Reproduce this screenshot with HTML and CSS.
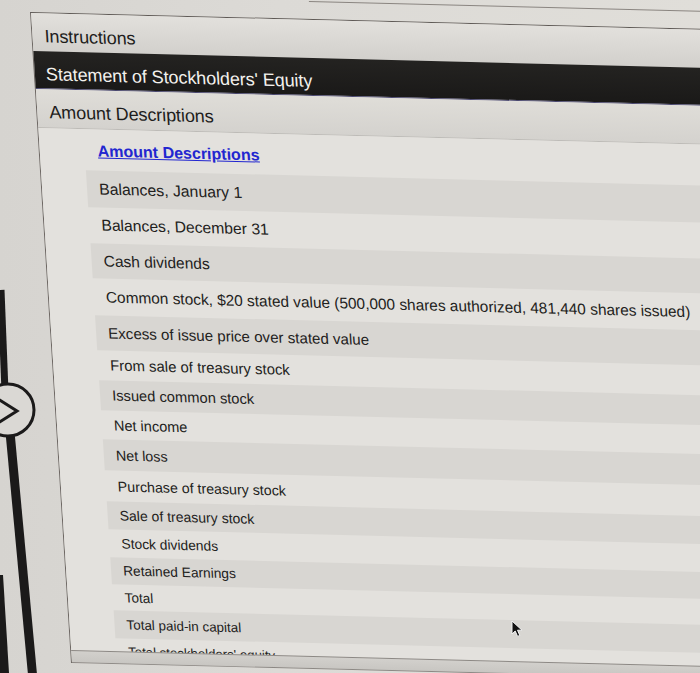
FILE: index.html
```html
<!DOCTYPE html>
<html lang="en">
<head>
<meta charset="utf-8">
<title>Statement of Stockholders' Equity</title>
<link rel="stylesheet" href="styles.css">
</head>
<body>
<div class="handle" aria-hidden="true">
  <svg width="80" height="673" viewBox="0 0 80 673">
    <line x1="1" y1="290" x2="5" y2="392" stroke="#1b1a1a" stroke-width="7"/>
    <line x1="10" y1="432" x2="33" y2="680" stroke="#1b1a1a" stroke-width="9"/>
    <polygon points="0,575 3,575 9,673 0,673" fill="#1b1a1a"/>
    <circle cx="8" cy="410" r="26" fill="#dad8d4" stroke="#1b1a1a" stroke-width="3"/>
    <polyline points="-2,399 17,411 -2,423" fill="none" stroke="#1b1a1a" stroke-width="3" stroke-linejoin="miter"/>
  </svg>
</div>

<div class="screen">
  <div class="rule"></div>
  <div class="panel">
    <div class="tab tab-instructions">Instructions</div>
    <div class="tab tab-title">Statement of Stockholders' Equity</div>
    <div class="tab tab-amount">Amount Descriptions</div>
    <div class="list">
      <div class="link-row"><a class="link" href="#">Amount Descriptions</a></div>
      <div class="row band r1">Balances, January 1</div>
      <div class="row r2">Balances, December 31</div>
      <div class="row band r3">Cash dividends</div>
      <div class="row r4">Common stock, $20 stated value (500,000 shares authorized, 481,440 shares issued)</div>
      <div class="row band r5">Excess of issue price over stated value</div>
      <div class="row r6">From sale of treasury stock</div>
      <div class="row band r7">Issued common stock</div>
      <div class="row r8">Net income</div>
      <div class="row band r9">Net loss</div>
      <div class="row r10">Purchase of treasury stock</div>
      <div class="row band r11">Sale of treasury stock</div>
      <div class="row r12">Stock dividends</div>
      <div class="row band r13">Retained Earnings</div>
      <div class="row r14">Total</div>
      <div class="row band r15">Total paid-in capital</div>
      <div class="row r16">Total stockholders' equity</div>
    </div>
    <div class="footer"></div>
  </div>
</div>

<div class="cursor" aria-hidden="true">
  <svg width="14" height="18" viewBox="0 0 14 18">
    <path d="M1 1 L1 14 L4.2 11 L6.6 16.4 L8.8 15.4 L6.5 10.2 L11 10.2 Z" fill="#111" stroke="#f4f4f4" stroke-width="1"/>
  </svg>
</div>
</body>
</html>
```
FILE: styles.css
```css
html, body {
  margin: 0;
  padding: 0;
}
body {
  width: 700px;
  height: 673px;
  overflow: hidden;
  position: relative;
  background: linear-gradient(90deg, #d6d4d0 0%, #dcdad6 40%, #e0ded9 100%);
  font-family: "Liberation Sans", Arial, Helvetica, sans-serif;
  color: #1f1e1d;
}

.handle {
  position: absolute;
  left: 0;
  top: 0;
  z-index: 2;
}
.handle svg { display: block; overflow: visible; }

.screen {
  margin: -6px 0 0 30px;
  width: 760px;
  transform-origin: 0 18px;
  transform: matrix(1, 0.025, 0.063, 1, 0, 0);
}

.rule {
  height: 1px;
  margin: 0 0 17px 280px;
  background: #8a8580;
}

.panel {
  border-top: 1px solid #5e5955;
  border-left: 1px solid #6a6561;
  background: #e2e0dc;
}

.tab {
  height: 38px;
  box-sizing: border-box;
  padding: 13px 0 0 12px;
  font-size: 18px;
  line-height: 20px;
  letter-spacing: -0.1px;
  white-space: nowrap;
}
.tab-instructions {
  background: linear-gradient(#e2e0dc, #d2d0cc);
  color: #1e1d1c;
}
.tab-title {
  padding-left: 11px;
  background: linear-gradient(#242321, #1a1918);
  color: #f3f1ed;
  border-bottom: 1px solid #4a4870;
}
.tab-amount {
  height: 39px;
  padding-left: 12px;
  background: linear-gradient(#dfddd8, #d4d2ce);
  color: #1e1d1c;
  border-bottom: 1px solid #bdbbb7;
}

.list {
  height: 522px;
  box-sizing: border-box;
  padding-left: 45px;
  overflow: hidden;
  background: #e3e1dd;
}

.link-row {
  height: 41px;
  box-sizing: border-box;
  padding: 12px 0 0 13px;
  font-size: 16px;
  line-height: 20px;
  font-weight: bold;
}
.link {
  color: #2226d0;
  text-decoration: underline;
}

.row {
  display: flex;
  align-items: center;
  box-sizing: border-box;
  padding-left: 12px;
  white-space: nowrap;
  color: #222120;
}
.band { background: #d8d6d2; }

.r1  { height: 37px; font-size: 15.8px; }
.r2  { height: 36px; font-size: 15.7px; }
.r3  { height: 35px; font-size: 15.5px; }
.r4  { height: 37px; font-size: 15.4px; }
.r5  { height: 35px; font-size: 15.1px; }
.r6  { height: 30px; font-size: 14.9px; }
.r7  { height: 30px; font-size: 14.7px; }
.r8  { height: 29px; font-size: 14.5px; }
.r9  { height: 31px; font-size: 14.3px; }
.r10 { height: 31px; font-size: 14.2px; }
.r11 { height: 28px; font-size: 14px; }
.r12 { height: 28px; font-size: 13.8px; }
.r13 { height: 27px; font-size: 13.7px; }
.r14 { height: 26px; font-size: 13.5px; }
.r15 { height: 28px; font-size: 13.4px; }
.r16 { height: 26px; font-size: 13.2px; }

.footer {
  height: 11px;
  background: linear-gradient(#d2d0cc, #c8c6c2);
  border-top: 1px solid #8c8884;
  border-bottom: 1px solid #8c8884;
}

.cursor {
  position: absolute;
  left: 511px;
  top: 620px;
  z-index: 3;
}
.cursor svg { display: block; }
```
